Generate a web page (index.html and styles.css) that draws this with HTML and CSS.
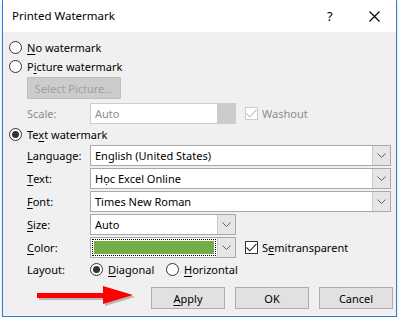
FILE: index.html
```html
<!DOCTYPE html>
<html>
<head>
<meta charset="utf-8">
<link rel="stylesheet" href="styles.css">
</head>
<body>
<div class="window">
  <div class="titlebar">
    <span class="title">Printed Watermark</span>
    <span class="help">?</span>
    <span class="close"><svg width="11" height="11" viewBox="0 0 11 11"><path d="M0.5 0.5 L10.5 10.5 M10.5 0.5 L0.5 10.5" stroke="#000" stroke-width="1.1" fill="none"/></svg></span>
  </div>
  <div class="content">
    <div class="radio-row"><span class="radio"></span><span><u>N</u>o watermark</span></div>
    <div class="radio-row"><span class="radio"></span><span>P<u>i</u>cture watermark</span></div>
    <div class="indent"><div class="btn btn-disabled">Select Picture...</div></div>
    <div class="indent scale-row">
      <span class="label disabled-text">Scale:</span>
      <div class="combo combo-short combo-disabled"><span class="combo-text">Auto</span><span class="drop"><svg width="9" height="5" viewBox="0 0 9 5"><path d="M0.5 0.5 L4.5 4.5 L8.5 0.5" stroke="#c4c4c4" fill="none"/></svg></span></div>
      <div class="check-wrap">
        <span class="check check-disabled"><svg width="11" height="9" viewBox="0 0 11 9"><path d="M0.5 4.5 L3.8 7.8 L10.5 0.8" stroke="#c0c0c0" stroke-width="1.1" fill="none"/></svg></span>
        <span class="washout">Washout</span>
      </div>
    </div>
    <div class="radio-row row-text"><span class="radio radio-on"></span><span>Te<u>x</u>t watermark</span></div>
    <div class="indent form">
      <span class="label"><u>L</u>anguage:</span>
      <div class="combo"><span class="combo-text">English (United States)</span><span class="drop"><svg width="9" height="5" viewBox="0 0 9 5"><path d="M0.5 0.5 L4.5 4.5 L8.5 0.5" stroke="#606060" fill="none"/></svg></span></div>
      <span class="label"><u>T</u>ext:</span>
      <div class="combo"><span class="combo-text">Học Excel Online</span><span class="drop"><svg width="9" height="5" viewBox="0 0 9 5"><path d="M0.5 0.5 L4.5 4.5 L8.5 0.5" stroke="#606060" fill="none"/></svg></span></div>
      <span class="label"><u>F</u>ont:</span>
      <div class="combo"><span class="combo-text">Times New Roman</span><span class="drop"><svg width="9" height="5" viewBox="0 0 9 5"><path d="M0.5 0.5 L4.5 4.5 L8.5 0.5" stroke="#606060" fill="none"/></svg></span></div>
      <span class="label"><u>S</u>ize:</span>
      <div class="combo combo-short"><span class="combo-text">Auto</span><span class="drop"><svg width="9" height="5" viewBox="0 0 9 5"><path d="M0.5 0.5 L4.5 4.5 L8.5 0.5" stroke="#606060" fill="none"/></svg></span></div>
      <span class="label"><u>C</u>olor:</span>
      <div class="color-line">
        <div class="combo combo-short"><span class="focus"><span class="swatch"></span></span><span class="drop"><svg width="9" height="5" viewBox="0 0 9 5"><path d="M0.5 0.5 L4.5 4.5 L8.5 0.5" stroke="#606060" fill="none"/></svg></span></div>
        <div class="check-wrap">
          <span class="check"><svg width="11" height="9" viewBox="0 0 11 9"><path d="M0.5 4.5 L3.8 7.8 L10.5 0.8" stroke="#222" stroke-width="1.1" fill="none"/></svg></span>
          <span>S<u>e</u>mitransparent</span>
        </div>
      </div>
      <span class="label layout-label">Layout:</span>
      <div class="layout-opts">
        <span class="opt"><span class="radio radio-on"></span><span><u>D</u>iagonal</span></span>
        <span class="opt"><span class="radio"></span><span><u>H</u>orizontal</span></span>
      </div>
    </div>
    <div class="buttons">
      <div class="btn"><u>A</u>pply</div>
      <div class="btn">OK</div>
      <div class="btn">Cancel</div>
    </div>
  </div>
  <svg class="arrow" width="104" height="24" viewBox="0 0 104 24">
    <g fill="#8a8a8a" opacity="0.55">
      <rect x="2" y="9" width="70" height="5"/>
      <polygon points="68,1 98,11 68,20"/>
    </g>
    <g fill="#ff0000">
      <rect x="0" y="7" width="70" height="5"/>
      <polygon points="66,0 96,9 66,18"/>
    </g>
  </svg>
</div>
</body>
</html>
```
FILE: styles.css
```css
* { box-sizing: border-box; }
body {
  margin: 0;
  background: #ffffff;
  font-family: "Noto Sans", "Open Sans", sans-serif;
  font-size: 11px;
  color: #000;
}
u { text-decoration: underline; text-underline-offset: 2px; }
.window {
  position: relative;
  margin-left: 2px;
  width: 395px;
  height: 317px;
  border-left: 1px solid #2b7ed4;
  border-right: 1px solid #2b7ed4;
  border-bottom: 1px solid #2b7ed4;
  box-shadow: 0 2px 4px rgba(0,0,0,0.15);
  display: flex;
  flex-direction: column;
}
.titlebar {
  height: 32px;
  background: #ffffff;
  display: flex;
  align-items: center;
  padding-left: 9px;
  flex: none;
}
.title { font-size: 11.5px; flex: 1; padding-bottom: 1px; }
.help { font-size: 13px; width: 10px; margin-right: 32px; padding-bottom: 1px; }
.close { width: 11px; height: 11px; margin-right: 16px; display: flex; }
.content {
  flex: 1;
  background: #f0f0f0;
  padding: 6px 0 0 6px;
}
.radio-row {
  height: 19px;
  display: flex;
  align-items: center;
  gap: 5px;
}
.radio {
  width: 13px;
  height: 13px;
  border: 1px solid #333;
  border-radius: 50%;
  background: #fff;
  display: inline-flex;
  align-items: center;
  justify-content: center;
  flex: none;
}
.radio-on::after {
  content: "";
  width: 7px;
  height: 7px;
  border-radius: 50%;
  background: #333;
}
.indent { margin-left: 18px; }
.btn {
  width: 74px;
  height: 22px;
  background: #e1e1e1;
  border: 1px solid #adadad;
  display: flex;
  align-items: center;
  justify-content: center;
}
.btn-disabled {
  width: 94px;
  margin-top: 1px;
  background: #cccccc;
  border-color: #bfbfbf;
  color: #a0a0a0;
}
.scale-row {
  margin-top: 4px;
  display: flex;
  align-items: center;
  height: 21px;
}
.label { width: 63px; display: flex; align-items: center; }
.disabled-text { color: #8d8d8d; }
.combo {
  width: 301px;
  height: 21px;
  border: 1px solid #a9a9a9;
  background: #fff;
  display: flex;
  align-items: stretch;
}
.combo-short { width: 146px; }
.combo-text { flex: 1; padding-left: 4px; display: flex; align-items: center; }
.drop {
  width: 18px;
  background: #e6e6e6;
  border-left: 1px solid #c8c8c8;
  display: flex;
  align-items: center;
  justify-content: center;
}
.combo-disabled { border-color: #cccccc; color: #8d8d8d; }
.combo-disabled .drop { background: #cccccc; border-color: #cccccc; }
.check-wrap { display: flex; align-items: center; gap: 4px; margin-left: 9px; }
.check {
  width: 13px;
  height: 13px;
  border: 1px solid #333;
  background: #fff;
  display: flex;
  align-items: center;
  justify-content: center;
}
.check-disabled { border-color: #cccccc; }
.washout { color: #8d8d8d; }
.row-text { margin-top: 1px; }
.form {
  margin-top: 1px;
  display: grid;
  grid-template-columns: 63px auto;
  grid-auto-rows: 21px;
  row-gap: 2px;
  justify-items: start;
}
.color-line { display: flex; align-items: center; }
.focus {
  flex: 1;
  margin: 1px;
  border: 1px dotted #000;
  padding: 1px;
  display: flex;
}
.swatch { flex: 1; background: #70ad47; }
.layout-label, .layout-opts { margin-top: -2px; }
.layout-opts { display: flex; align-items: center; }
.opt { display: flex; align-items: center; gap: 5px; width: 76px; }
.buttons {
  display: flex;
  justify-content: flex-end;
  gap: 10px;
  margin-top: 6px;
  padding-right: 3px;
}
.arrow { position: absolute; left: 34px; top: 286px; }
```
